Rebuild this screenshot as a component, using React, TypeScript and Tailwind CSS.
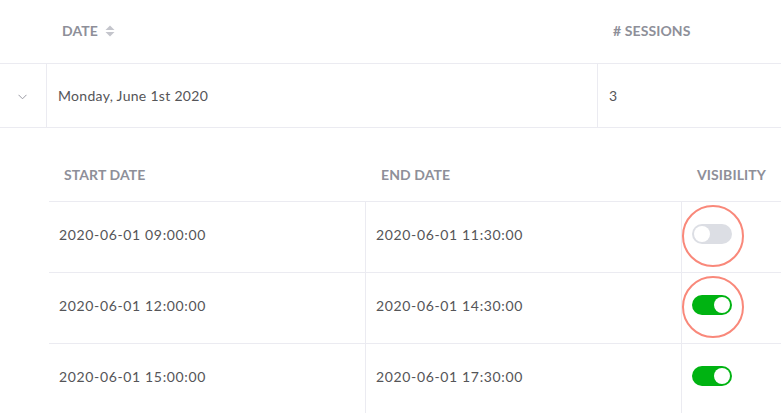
import React from 'react'

const sessions = [
  { start: '2020-06-01 09:00:00', end: '2020-06-01 11:30:00', visible: false, marked: true },
  { start: '2020-06-01 12:00:00', end: '2020-06-01 14:30:00', visible: true, marked: true },
  { start: '2020-06-01 15:00:00', end: '2020-06-01 17:30:00', visible: true, marked: false },
]

function SortIcon() {
  return (
    <svg width="10" height="12" viewBox="0 0 10 12" className="ml-[7px]">
      <path d="M5 0.5 L9.5 5 H0.5 Z" fill="#c4c5cc" />
      <path d="M5 11.5 L9.5 7 H0.5 Z" fill="#c4c5cc" />
    </svg>
  )
}

function Toggle({ on }: { on: boolean }) {
  return (
    <div
      className={`flex items-center w-10 h-5 rounded-full p-[2px] ${
        on ? 'bg-[#00b312] justify-end' : 'bg-[#dcdee4] justify-start'
      }`}
    >
      <div className="w-4 h-4 rounded-full bg-white" />
    </div>
  )
}

export default function App() {
  return (
    <div className="w-[781px] h-[413px] overflow-hidden bg-white text-[#555558] font-['Lato','Open_Sans',sans-serif]">
      {/* Main table header */}
      <div className="grid grid-cols-[46px_551px_1fr] h-[64px] border-b border-[#ebebf1] text-[14px] font-bold text-[#8e8f99] tracking-[0.1px]">
        <div />
        <div className="flex items-center pl-4 pb-[2px]">
          DATE
          <SortIcon />
        </div>
        <div className="flex items-center pl-4 pb-[2px]"># SESSIONS</div>
      </div>

      {/* Day row */}
      <div className="grid grid-cols-[46px_551px_1fr] h-[64px] border-b border-[#ebebf1] text-[14px]">
        <div className="flex items-center justify-center pr-[2px] pt-[2px]">
          <svg width="9" height="6" viewBox="0 0 9 6">
            <path d="M0.5 0.8 L4.5 4.8 L8.5 0.8" fill="none" stroke="#9a9aa3" strokeWidth="1" />
          </svg>
        </div>
        <div className="flex items-center pl-[11px] border-l border-[#ebebf1] tracking-[0.3px]">
          Monday, June 1st 2020
        </div>
        <div className="flex items-center pl-[11px] border-l border-[#ebebf1]">3</div>
      </div>

      {/* Expanded sessions */}
      <div className="pl-[49px] pt-[19px]">
        <div className="grid grid-cols-[316px_316px_1fr] h-[55px] border-b border-[#ebebf1] text-[14px] font-bold text-[#8e8f99] tracking-[0.1px]">
          <div className="flex items-center pl-[15px]">START DATE</div>
          <div className="flex items-center pl-[16px]">END DATE</div>
          <div className="flex items-center pl-[16px]">VISIBILITY</div>
        </div>
        {sessions.map((s) => (
          <div
            key={s.start}
            className="grid grid-cols-[316px_316px_1fr] h-[71px] border-b border-[#ebebf1] text-[14px] tracking-[0.65px]"
          >
            <div className="flex items-center pl-[10px] pb-[6px]">{s.start}</div>
            <div className="flex items-center pl-[10px] pb-[6px] border-l border-[#ebebf1]">{s.end}</div>
            <div className="flex items-center pl-[10px] pb-[6px] border-l border-[#ebebf1]">
              <div className="relative">
                <Toggle on={s.visible} />
                {s.marked && (
                  <div className="absolute left-[-10px] top-[-19px] w-[62px] h-[62px] rounded-full border-2 border-[#f9887a]" />
                )}
              </div>
            </div>
          </div>
        ))}
      </div>
    </div>
  )
}
